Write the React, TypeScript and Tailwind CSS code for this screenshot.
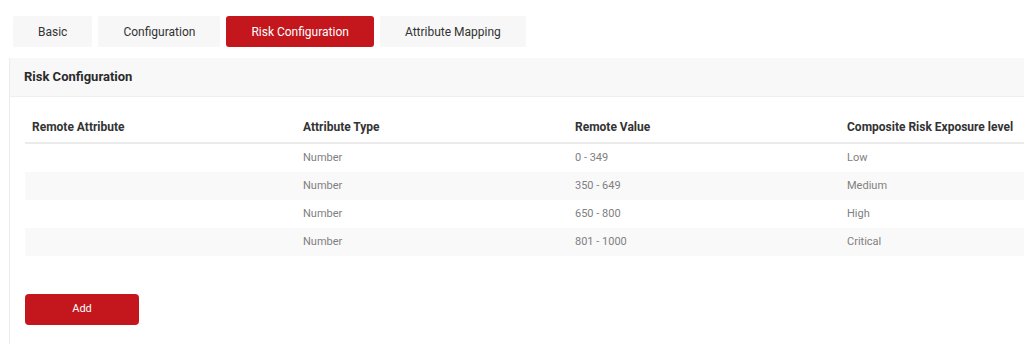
import React from "react";

const tabs = ["Basic", "Configuration", "Risk Configuration", "Attribute Mapping"];
const rows = [
  ["", "Number", "0 - 349", "Low"],
  ["", "Number", "350 - 649", "Medium"],
  ["", "Number", "650 - 800", "High"],
  ["", "Number", "801 - 1000", "Critical"],
];

export default function App() {
  return (
    <div
      className="w-[1024px] h-[344px] overflow-hidden bg-white"
      style={{ fontFamily: "Roboto, 'Liberation Sans', sans-serif" }}
    >
      <div className="flex gap-[6px] pl-[13px] pt-[16px]">
        {tabs.map((t, i) => (
          <div
            key={t}
            className={
              i === 2
                ? "h-[31px] px-[25px] flex items-center rounded-[3px] bg-[#c3161d] text-white text-[12px]"
                : "h-[31px] px-[25px] flex items-center rounded-[2px] bg-[#f7f7f7] text-[#333] text-[12px]"
            }
          >
            {t}
          </div>
        ))}
      </div>
      <div className="ml-[9px] mt-[11px] w-[1030px] h-[300px] border-l border-[#ececec]">
        <div className="h-[39px] bg-[#f8f8f8] border-b border-[#efefef] flex items-center pl-[14px] text-[13px] font-bold text-[#2b2b2b]">
          Risk Configuration
        </div>
        <div className="pl-[15px] pt-[15px]">
          <div className="grid grid-cols-[271px_272px_272px_1fr] h-[32px] items-center border-b-2 border-[#ebebeb] text-[12px] font-bold text-[#333]">
            <div className="pl-[7px]">Remote Attribute</div>
            <div className="pl-[7px]">Attribute Type</div>
            <div className="pl-[7px]">Remote Value</div>
            <div className="pl-[7px]">Composite Risk Exposure level</div>
          </div>
          {rows.map((r, i) => (
            <div
              key={i}
              className={
                i % 2 === 1
                  ? "grid grid-cols-[271px_272px_272px_1fr] h-[28px] items-center bg-[#f9f9f9] text-[11px] text-[#808080]"
                  : "grid grid-cols-[271px_272px_272px_1fr] h-[28px] items-center bg-white text-[11px] text-[#808080]"
              }
            >
              {r.map((c, j) => (
                <div key={j} className="pl-[7px]">
                  {c}
                </div>
              ))}
            </div>
          ))}
          <button className="mt-[38px] w-[114px] h-[31px] rounded-[4px] bg-[#c3161d] text-white text-[11px] flex items-center justify-center">
            Add
          </button>
        </div>
      </div>
    </div>
  );
}
